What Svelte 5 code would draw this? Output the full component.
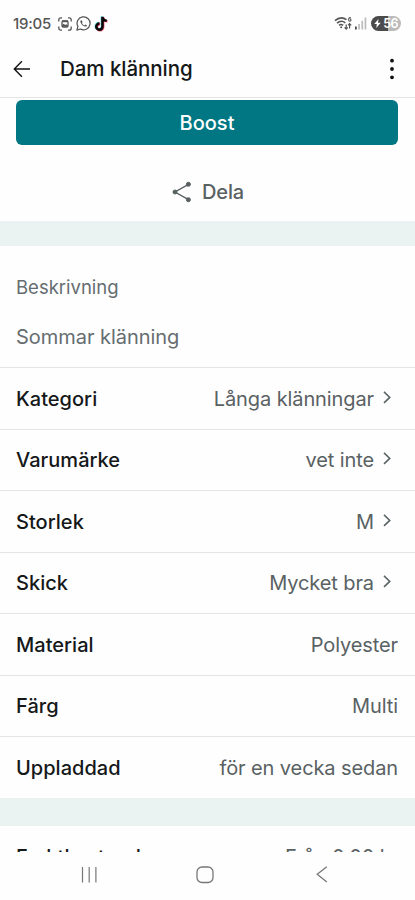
<script>
  const details = [
    { label: 'Kategori', value: 'Långa klänningar', link: true },
    { label: 'Varumärke', value: 'vet inte', link: true },
    { label: 'Storlek', value: 'M', link: true },
    { label: 'Skick', value: 'Mycket bra', link: true },
    { label: 'Material', value: 'Polyester' },
    { label: 'Färg', value: 'Multi' },
    { label: 'Uppladdad', value: 'för en vecka sedan' },
  ]
</script>

<div class="screen">
  <div class="status">
    <span class="time">19:05</span>
    <svg class="capture" width="14" height="14" viewBox="0 0 14 14" fill="none" stroke="#555" stroke-width="1.3">
      <path d="M.8 4.4V2.8a2 2 0 0 1 2-2H4M10 .8h1.2a2 2 0 0 1 2 2v1.600M13.2 9.600v1.600a2 2 0 0 1-2 2H10M4 13.200H2.800a2 2 0 0 1-2-2V9.600" />
      <rect x="4" y="4" width="6" height="6" rx="1.2" />
      <path d="M4 9.800V8l1.700-1.300L7.200 8l1-.8L10 8.400v1.400z" fill="#555" stroke="none" />
      <path d="M4 4.300h6" stroke-width="1.8" />
    </svg>
    <svg class="whatsapp" width="15" height="15" viewBox="0 0 15 15" fill="none" stroke="#555" stroke-width="1.25">
      <path d="M.9 14.100l1-3.600A6.500 6.500 0 1 1 4.400 13z" stroke-linejoin="round" />
      <path d="M5.300 3.900c-.9.5-1.100 1.500-.7 2.600.8 2 2.100 3.300 4.100 4 1 .3 2-.1 2.300-1.100L9.300 8.500l-.9.900C7.300 8.900 6.400 8 5.900 6.900l.7-.9z" fill="#555" stroke="none" />
    </svg>
    <svg class="tiktok" width="15" height="16" viewBox="0 0 14 15" fill="none" stroke-width="2.4">
      <path d="M7.900.8v9.100a2.900 2.900 0 1 1-2.800-2.900M7.900.8c.2 2.100 1.700 3.500 4 3.600" stroke="#5de0e2" transform="translate(-.5 -.3)" />
      <path d="M7.900.8v9.100a2.900 2.900 0 1 1-2.800-2.900M7.900.8c.2 2.100 1.700 3.500 4 3.600" stroke="#ef4565" transform="translate(.6 .5)" />
      <path d="M7.900.8v9.100a2.900 2.900 0 1 1-2.800-2.900M7.900.8c.2 2.100 1.700 3.500 4 3.600" stroke="#080808" />
    </svg>

    <svg class="wifi" width="19" height="15" viewBox="0 0 19 15" fill="none" stroke="#555" stroke-width="1.6">
      <path d="M1 4.600q5.700-5 11.500-1M3 7.100q4.200-3.500 8.300-.3M5.100 9.300q2-1.600 4 0" />
      <circle cx="7.2" cy="11.2" r="1" fill="#555" stroke="none" />
      <path d="M16.800 1.700c-1.500-.4-2.300.6-2.200 2.300a1.200 1.200 0 1 0 1.200-1.200" stroke-width="1.1" />
      <path d="M12.200 8.500v4.500M10.600 11.400l1.600 1.700 1.600-1.700M15.600 12.500V7.700M14 9.300l1.600-1.700L17.200 9.300" stroke-width="1.2" />
    </svg>
    <svg class="signal" width="12" height="13" viewBox="0 0 12 13">
      <rect x="0" y="9.5" width="1.7" height="3" fill="#444" />
      <rect x="3.2" y="7" width="1.7" height="5.5" fill="#bbb" />
      <rect x="6.4" y="3.8" width="1.7" height="8.7" fill="#bbb" />
      <rect x="9.6" y=".5" width="1.7" height="12" fill="#bbb" />
    </svg>
    <span class="battery">
      <svg width="7" height="9" viewBox="0 0 7 9" fill="#fff"><path d="M4.500 0L.3 5h2.500l-.5 4 4.400-5.200H4z" /></svg>
      56
    </span>
  </div>

  <header>
    <svg class="back" width="18" height="18" viewBox="0 0 18 18" fill="none" stroke="#111" stroke-width="1.4">
      <path d="M17 9H1.500M8.900 1.300L1.300 9l7.600 7.700" />
    </svg>
    <h1>Dam klänning</h1>
    <svg class="more" width="6" height="22" viewBox="0 0 6 22" fill="#111">
      <circle cx="3" cy="2.700" r="1.9" />
      <circle cx="3" cy="11" r="1.9" />
      <circle cx="3" cy="19.300" r="1.9" />
    </svg>
  </header>

  <main>
    <div class="actions">
      <button class="boost">Boost</button>
      <button class="share">
        <svg width="20" height="22" viewBox="0 0 20 22" fill="#596163" stroke="#596163">
          <path d="M16.500 3.300L3 11l13.500 7.700" fill="none" stroke-width="1.4" />
          <circle cx="16.400" cy="3.300" r="2" />
          <circle cx="3" cy="11" r="2" />
          <circle cx="16.400" cy="18.700" r="2" />
        </svg>
        Dela
      </button>
    </div>

    <section class="description">
      <h2>Beskrivning</h2>
      <p>Sommar klänning</p>
    </section>

    <ul>
      {#each details as row (row.label)}
        <li>
          <span class="label">{row.label}</span>
          <span class="value">{row.value}</span>
          {#if row.link}
            <svg class="chevron" width="8" height="13" viewBox="0 0 8 13" fill="none" stroke="#596163" stroke-width="1.5">
              <path d="M1 .9l5.800 5.500L1 11.900" />
            </svg>
          {/if}
        </li>
      {/each}
    </ul>

    <div class="shipping">
      <span class="label">Fraktkostnad</span>
      <span class="value">Från 0,00 kr</span>
    </div>
  </main>

  <nav>
    <svg width="16" height="16" viewBox="0 0 16 16" stroke="#777" stroke-width="1.2">
      <path d="M1.500 0v15.500M8.200 0v15.500M14.900 0v15.500" />
    </svg>
    <svg class="home" width="18" height="18" viewBox="0 0 18 18" fill="none" stroke="#777" stroke-width="1.3">
      <rect x="1" y="1" width="16" height="15.5" rx="5" />
    </svg>
    <svg class="prev" width="12" height="17" viewBox="0 0 12 17" fill="none" stroke="#777" stroke-width="1.3">
      <path d="M10.800.8L1.200 8.300l9.600 7.700" />
    </svg>
  </nav>
</div>

<style>
  :global(body) { margin: 0; background: #fefefe; }

  .screen {
    width: 415px;
    height: 900px;
    display: flex;
    flex-direction: column;
    overflow: hidden;
    background: #fefefe;
    color: #151819;
    font-family: Inter, sans-serif;
    font-size: 20px;
  }
  svg { display: block; flex: none; }
  h1, h2, p, ul { margin: 0; padding: 0; font-weight: 400; }
  button { border: 0; padding: 0; font: inherit; }

  .status {
    height: 41px;
    padding: 6px 14px 0 13px;
    box-sizing: border-box;
    display: flex;
    align-items: center;
    flex: none;
  }
  .time { width: 45px; font-size: 15px; font-weight: 500; letter-spacing: -0.2px; color: #555; }
  .whatsapp { margin-left: 4px; }
  .tiktok { margin-left: 3px; }
  .wifi { margin-left: auto; }
  .signal { margin-left: 2px; }
  .battery {
    width: 30px;
    height: 15px;
    margin-left: 4px;
    display: flex;
    align-items: center;
    justify-content: center;
    gap: 2px;
    border-radius: 8px;
    background: linear-gradient(90deg, #4b4b4b 56%, #bbb 56%);
    color: #fff;
    font-size: 12.5px;
    font-weight: 600;
    letter-spacing: -0.8px;
  }

  header {
    height: 56px;
    padding: 0 20px 0 13px;
    display: flex;
    align-items: center;
    flex: none;
    border-bottom: 1px solid #e5e7e7;
  }
  h1 {
    margin: 0 0 1px 29px;
    font-size: 20.5px;
    font-weight: 450;
    letter-spacing: -0.05px;
  }
  .more { margin-left: auto; }

  main { flex: 1; min-height: 0; overflow: hidden; }
  .actions {
    height: 123px;
    padding: 2px 17px 0 16px;
    box-sizing: border-box;
    display: flex;
    flex-direction: column;
    align-items: center;
  }
  .boost {
    width: 100%;
    height: 45px;
    border-radius: 6px;
    background: #007782;
    color: #fff;
    font-weight: 500;
  }
  .share {
    height: 48px;
    margin: 23px 0 0 2px;
    display: flex;
    align-items: center;
    gap: 10px;
    background: none;
    color: #596163;
    font-weight: 500;
    letter-spacing: -0.1px;
  }

  .description {
    height: 92px;
    padding: 29px 16px 0;
    border-top: 25px solid #ebf2f2;
    color: #666d70;
  }
  h2 { font-size: 18.5px; line-height: 24px; }
  p { margin-top: 25px; line-height: 26px; letter-spacing: -0.04px; }

  ul { list-style: none; }
  li {
    height: 61.54px;
    padding: 1px 17px 0 16px;
    box-sizing: border-box;
    display: flex;
    align-items: center;
    border-top: 1px solid #e3e5e5;
  }
  .label { font-weight: 500; letter-spacing: 0.03px; }
  .value { margin-left: auto; color: #596163; letter-spacing: -0.1px; }
  .chevron { margin: 0 7px 3px 9px; }

  .shipping {
    padding: 19px 17px 0 16px;
    display: flex;
    border-top: 28px solid #ebf2f2;
  }

  nav {
    height: 48px;
    padding: 0 87px 3px 81px;
    box-sizing: border-box;
    display: flex;
    align-items: center;
    flex: none;
  }
  .home { margin-left: 99px; }
  .prev { margin-left: auto; }
</style>
